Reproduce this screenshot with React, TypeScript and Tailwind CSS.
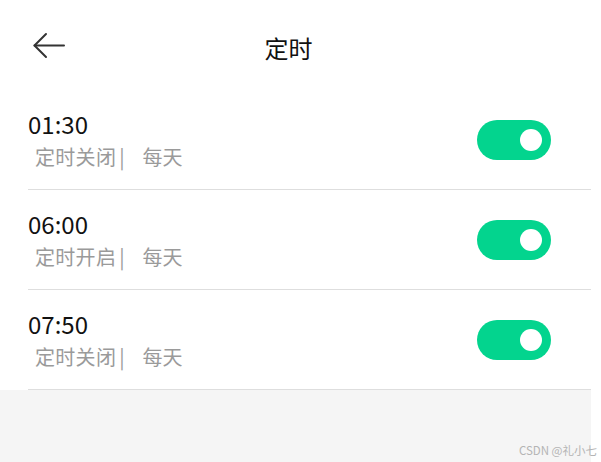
import React from "react";

const rows = [
  { time: "01:30", status: "定时关闭" },
  { time: "06:00", status: "定时开启" },
  { time: "07:50", status: "定时关闭" },
];

function Toggle() {
  return (
    <div className="relative w-[74px] h-[40px] rounded-full bg-[#03d48e] shrink-0">
      <div className="absolute right-[9px] top-[9px] w-[22px] h-[22px] rounded-full bg-white" />
    </div>
  );
}

export default function App() {
  return (
    <div
      className="relative w-[601px] h-[462px] bg-white overflow-hidden"
      style={{ fontFamily: '"Noto Sans CJK SC", "Noto Sans", sans-serif' }}
    >
      <div className="w-[591px] h-full flex flex-col bg-[#f5f5f5]">
        <div className="bg-white">
          <div className="h-[90px] flex items-center">
            <div className="w-[80px] pl-[33px] flex items-center">
              <svg width="32" height="27" viewBox="0 0 32 27" fill="none" stroke="#333" strokeWidth="2" strokeLinecap="round" strokeLinejoin="round">
                <path d="M1.5 13.5H31" />
                <path d="M13 2L1.5 13.5L13 25" />
              </svg>
            </div>
            <div className="flex-1 text-center text-[24px] leading-[28px] text-[#111] pt-[5px]">定时</div>
            <div className="w-[94px]" />
          </div>
          {rows.map((r) => (
            <div key={r.time} className="ml-[28px] h-[100px] border-b border-[#dedede] flex items-center pr-[40px]">
              <div className="flex-1 flex flex-col pb-[1px]">
                <div className="text-[24px] leading-[28px] text-[#111]">{r.time}</div>
                <div className="mt-[7px] ml-[7px] text-[20px] leading-[24px] text-[#9a9a9a] flex items-center">
                  <span className="tracking-[0.3px]">{r.status}</span>
                  <span className="ml-[3px]">|</span>
                  <span className="ml-[18px]">每天</span>
                </div>
              </div>
              <Toggle />
            </div>
          ))}
        </div>
      </div>
      <div className="absolute right-[4px] bottom-[6px] text-[11.5px] leading-[12px] text-[#b4b4b4]">CSDN @礼小七</div>
    </div>
  );
}
